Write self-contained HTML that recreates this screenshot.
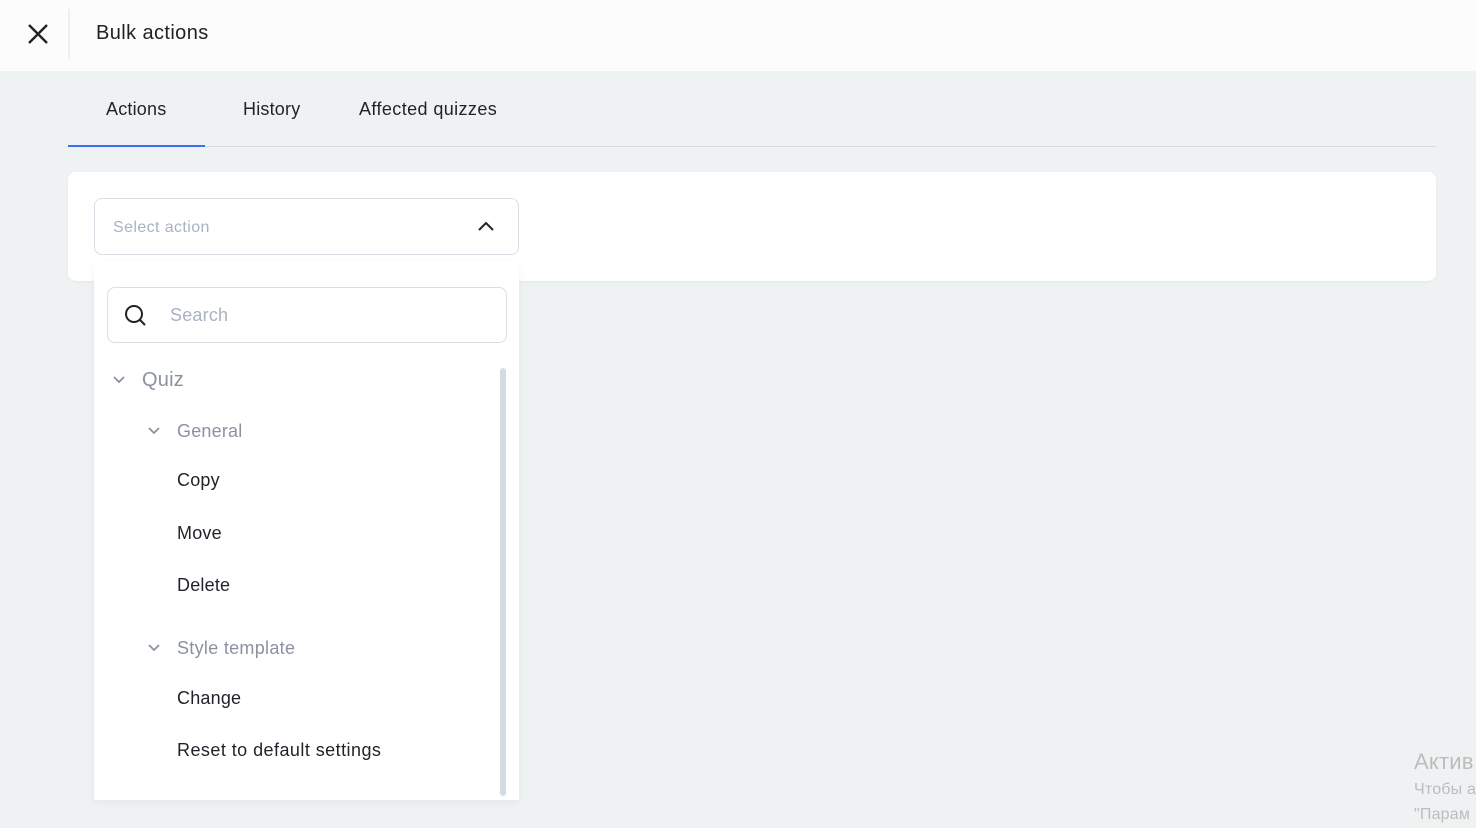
<!DOCTYPE html>
<html><head><meta charset="utf-8"><style>
*{margin:0;padding:0;box-sizing:border-box}
html,body{width:1476px;height:828px;overflow:hidden}
body{background:#eff2f3;font-family:"Liberation Sans","DejaVu Sans",sans-serif;position:relative;color:#1f2329}
.top{position:absolute;left:0;top:0;width:1476px;height:71px;background:#fcfcfc}
.sep{position:absolute;left:68px;top:9px;width:2px;height:50px;background:#efefef}
.t{position:absolute;white-space:nowrap;letter-spacing:.2px}
</style></head><body>
<div class="top"></div>
<svg style="position:absolute;left:27px;top:23px" width="22" height="22"><path d="M2 2L20 20M20 2L2 20" stroke="#222" stroke-width="2.4"/></svg>
<div class="sep"></div>
<div class="t" style="left:96px;top:22px;font-size:20px;color:#222;letter-spacing:.4px">Bulk actions</div>
<div class="t" style="left:106px;top:99px;font-size:18px">Actions</div>
<div class="t" style="left:243px;top:99px;font-size:18px">History</div>
<div class="t" style="left:359px;top:99px;font-size:18px;letter-spacing:.4px">Affected quizzes</div>
<div style="position:absolute;left:68px;top:146px;width:1368px;height:1px;background:#d8dcdf"></div>
<div style="position:absolute;left:68px;top:145px;width:137px;height:2px;background:#3b6ff5"></div>
<div style="position:absolute;left:68px;top:172px;width:1368px;height:109px;background:#fff;border-radius:8px;box-shadow:0 1px 3px rgba(0,0,0,.05)"></div>
<div style="position:absolute;left:94px;top:198px;width:425px;height:57px;border:1px solid #dcdde6;border-radius:8px;background:#fff"></div>
<div class="t" style="left:113px;top:219px;font-size:16px;color:#a8b2c4;letter-spacing:.4px">Select action</div>
<svg style="position:absolute;left:477px;top:220px" width="18" height="12"><path d="M2 10L9 3L16 10" stroke="#222" stroke-width="2" fill="none"/></svg>
<div style="position:absolute;left:94px;top:262px;width:425px;height:538px;background:#fff;border-radius:8px 8px 0 0;box-shadow:0 2px 8px rgba(0,0,0,.05)"></div>
<div style="position:absolute;left:107px;top:287px;width:400px;height:56px;border:1px solid #dcdde6;border-radius:8px"></div>
<svg style="position:absolute;left:124px;top:304px" width="24" height="24"><circle cx="10" cy="10" r="8" stroke="#222" stroke-width="2" fill="none"/><path d="M16 16L21 21" stroke="#222" stroke-width="2"/></svg>
<div class="t" style="left:170px;top:305px;font-size:18px;color:#a8b2c4">Search</div>
<div style="position:absolute;left:500px;top:368px;width:6px;height:428px;background:#d5dbe3;border-radius:3px"></div>
<svg style="position:absolute;left:112px;top:374px" width="14" height="12"><path d="M2 3L7 8L12 3" stroke="#8a92a0" stroke-width="1.8" fill="none"/></svg>
<div class="t" style="left:142px;top:369px;font-size:20px;color:#8a92a0">Quiz</div>
<svg style="position:absolute;left:147px;top:425px" width="14" height="12"><path d="M2 3L7 8L12 3" stroke="#8a92a0" stroke-width="1.8" fill="none"/></svg>
<div class="t" style="left:177px;top:421px;font-size:18px;color:#8a92a0">General</div>
<div class="t" style="left:177px;top:470px;font-size:18px">Copy</div>
<div class="t" style="left:177px;top:523px;font-size:18px">Move</div>
<div class="t" style="left:177px;top:575px;font-size:18px">Delete</div>
<svg style="position:absolute;left:147px;top:642px" width="14" height="12"><path d="M2 3L7 8L12 3" stroke="#8a92a0" stroke-width="1.8" fill="none"/></svg>
<div class="t" style="left:177px;top:638px;font-size:18px;color:#8a92a0;letter-spacing:.3px">Style template</div>
<div class="t" style="left:177px;top:688px;font-size:18px">Change</div>
<div class="t" style="left:177px;top:740px;font-size:18px;letter-spacing:.45px">Reset to default settings</div>
<div style="position:absolute;left:1410px;top:740px;width:66px;height:88px;overflow:hidden">
<div class="t" style="left:4px;top:9px;font-size:22px;color:#bcbcbc">Актив</div>
<div class="t" style="left:4px;top:41px;font-size:16px;color:#bcbcbc">Чтобы а</div>
<div class="t" style="left:4px;top:66px;font-size:16px;color:#bcbcbc">"Парам</div>
</div>
</body></html>
